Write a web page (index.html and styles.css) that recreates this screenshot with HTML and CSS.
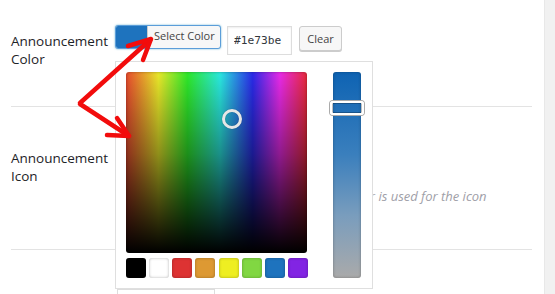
FILE: index.html
```html
<!DOCTYPE html>
<html lang="en">
<head>
<meta charset="utf-8">
<title>Announcement settings</title>
<link rel="stylesheet" href="styles.css">
</head>
<body>
<div class="page">
  <div class="main">
    <div class="row row-color">
      <div class="label">Announcement Color</div>
      <div class="field">
        <div class="controls">
          <button class="color-btn"><span class="swatch"></span><span class="btn-text">Select Color</span></button>
          <input class="hex" type="text" value="#1e73be">
          <button class="clear">Clear</button>
        </div>
        <div class="picker">
          <div class="picker-left">
            <div class="square"><span class="cursor"></span></div>
            <div class="palette">
              <span class="pal p-black"></span>
              <span class="pal p-white"></span>
              <span class="pal p-red"></span>
              <span class="pal p-orange"></span>
              <span class="pal p-yellow"></span>
              <span class="pal p-green"></span>
              <span class="pal p-blue"></span>
              <span class="pal p-purple"></span>
            </div>
          </div>
          <div class="slider"><span class="handle"></span></div>
        </div>
      </div>
    </div>
    <div class="row row-icon">
      <div class="label">Announcement Icon</div>
      <div class="field">
        <p class="desc"><span class="desc-pre">Pick an icon for the bar; the icon color</span> is used for the icon</p>
      </div>
    </div>
    <div class="row row-next">
      <div class="label"></div>
      <div class="field">
        <div class="next-box"></div>
      </div>
    </div>
  </div>
  <div class="sidebar"></div>
  <svg class="arrows" width="555" height="294" viewBox="0 0 555 294">
    <g stroke="#f20c0c" stroke-width="4.5" fill="none" stroke-linecap="round" stroke-linejoin="round">
      <path d="M80 103 L150 40"/>
      <path d="M128 46 L151 39 L143 60"/>
      <path d="M80 104 L129 136"/>
      <path d="M117 118 L129 136 L107 135"/>
    </g>
  </svg>
</div>
</body>
</html>
```

FILE: styles.css
```css
* { box-sizing: border-box; }
html, body { margin: 0; padding: 0; background: #fff; }
body { font-family: "Open Sans", "Noto Sans", sans-serif; color: #23282d; }

.page {
  position: relative;
  display: flex;
  width: 555px;
  height: 294px;
  overflow: hidden;
}
.main {
  width: 544px;
  padding: 0 12px 0 11px;
}
.sidebar {
  flex: 1;
  background: #f1f1f1;
  border-left: 1px solid #e8e8e8;
}

.row {
  display: flex;
  border-bottom: 1px solid #e3e3e3;
}
.row-color { height: 107px; padding-top: 25px; }
.row-icon { height: 143px; padding-top: 42px; }
.row-next { border-bottom: none; padding-top: 39px; }

.label {
  width: 104px;
  font-size: 13.5px;
  line-height: 18px;
  color: #1d2327;
}
.row-color .label { margin-top: 7px; }
.field { position: relative; flex: 1; min-width: 0; }

.controls {
  display: flex;
  align-items: flex-start;
  gap: 6px;
}
.color-btn {
  display: flex;
  align-items: stretch;
  width: 106px;
  height: 24px;
  padding: 0;
  border: 1px solid #5b9dd9;
  border-radius: 3px;
  background: #f7f7f7;
  box-shadow: 0 0 2px rgba(30, 140, 190, 0.7);
  font-family: "Open Sans", sans-serif;
  overflow: hidden;
}
.swatch {
  width: 31px;
  background: #1e73be;
}
.btn-text {
  flex: 1;
  font-size: 11px;
  line-height: 20px;
  color: #444;
  text-align: left;
  padding-left: 6px;
  border-left: 1px solid #ccc;
}
.hex {
  width: 65px;
  height: 29px;
  margin-top: 1px;
  padding: 0 0 0 6px;
  border: 1px solid #ddd;
  box-shadow: inset 0 1px 2px rgba(0, 0, 0, 0.07);
  font-family: "DejaVu Sans Mono", "Liberation Mono", monospace;
  font-size: 11.2px;
  color: #32373c;
}
.clear {
  width: 43px;
  height: 25px;
  margin-top: 1px;
  margin-left: 1px;
  padding: 0;
  border: 1px solid #ccc;
  border-radius: 3px;
  background: #f7f7f7;
  box-shadow: 0 1px 0 #ccc;
  font-family: "Open Sans", sans-serif;
  font-size: 11px;
  color: #444;
}

.picker {
  position: absolute;
  z-index: 2;
  left: 0;
  top: 36px;
  width: 258px;
  height: 228px;
  display: flex;
  gap: 25px;
  padding: 10px 11px 10px 10px;
  background: #fff;
  border: 1px solid #dfdfdf;
}
.picker-left { display: flex; flex-direction: column; gap: 5px; }
.square {
  position: relative;
  width: 181px;
  height: 181px;
  border-radius: 3px;
  background:
    linear-gradient(to bottom, rgba(0,0,0,0) 0%, rgba(0,0,0,0.38) 45%, #000 100%),
    linear-gradient(to right, #e84a2e 0%, #e8e82a 18%, #2ee82a 34%, #2ae8e0 52%, #2a2ae8 70%, #e82ae8 85%, #e82a3a 100%);
  box-shadow: inset 0 0 3px rgba(0, 0, 0, 0.35);
}
.cursor {
  position: absolute;
  left: 96px;
  top: 37px;
  width: 20px;
  height: 20px;
  border-radius: 50%;
  border: 3px solid #e6e6e6;
  box-shadow: 0 0 1px rgba(0,0,0,0.4), inset 0 0 1px rgba(0,0,0,0.4);
}
.palette {
  display: flex;
  justify-content: space-between;
  width: 182px;
}
.pal {
  width: 20px;
  height: 20px;
  border-radius: 3px;
  box-shadow: inset 0 0 3px rgba(0, 0, 0, 0.3);
}
.p-black { background: #000; }
.p-white { background: #fff; }
.p-red { background: #dd3333; }
.p-orange { background: #dd9933; }
.p-yellow { background: #eeee22; }
.p-green { background: #81d742; }
.p-blue { background: #1e73be; }
.p-purple { background: #8224e3; }

.slider {
  position: relative;
  width: 28px;
  height: 206px;
  border-radius: 3px;
  background: linear-gradient(to bottom, #0e63b3 0%, #3a7fbd 40%, #7a9dbd 70%, #aaaaaa 100%);
  box-shadow: inset 0 0 3px rgba(0, 0, 0, 0.3);
}
.handle {
  position: absolute;
  left: -3px;
  top: 29px;
  width: 34px;
  height: 14px;
  border-radius: 3px;
  border: 2px solid #fff;
  box-shadow: 0 0 0 1px #aaa, inset 0 0 0 1px rgba(0,0,0,0.25);
}

.desc {
  margin: 38px 0 0 0;
  font-size: 13px;
  line-height: 18px;
  font-style: italic;
  color: #a0a0a8;
  white-space: nowrap;
}
.desc-pre {
  display: inline-block;
  width: 260px;
  text-align: right;
  vertical-align: top;
}

.next-box {
  width: 98px;
  height: 30px;
  margin-left: 2px;
  border: 1px solid #ddd;
}

.arrows {
  position: absolute;
  left: 0;
  top: 0;
  z-index: 5;
  pointer-events: none;
}
```
